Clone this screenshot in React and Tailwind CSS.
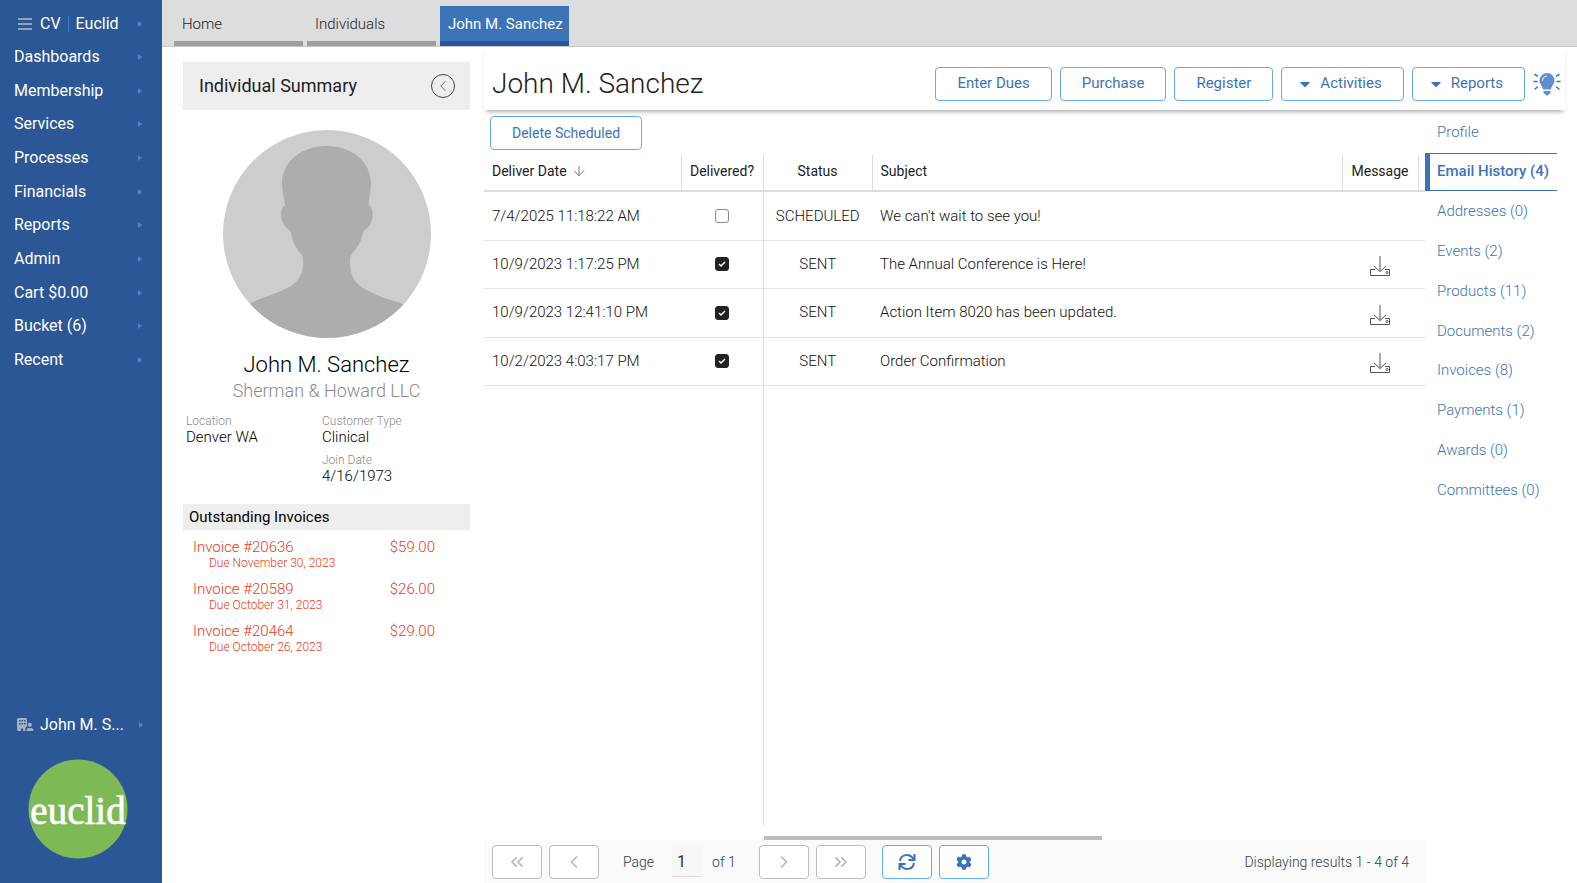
import React, { useState } from "react";
import { ArrowDown, ChevronLeft, ChevronRight, ChevronsLeft, ChevronsRight } from "lucide-react";
import { FaCaretDown, FaCog } from "react-icons/fa";

const MENU = [
  "Dashboards",
  "Membership",
  "Services",
  "Processes",
  "Financials",
  "Reports",
  "Admin",
  "Cart $0.00",
  "Bucket (6)",
  "Recent",
];

const TABS = ["Home", "Individuals", "John M. Sanchez"];

const INVOICES = [
  { number: "20636", due: "November 30, 2023", amount: "$59.00" },
  { number: "20589", due: "October 31, 2023", amount: "$26.00" },
  { number: "20464", due: "October 26, 2023", amount: "$29.00" },
];

const EMAILS = [
  { date: "7/4/2025 11:18:22 AM", delivered: false, status: "SCHEDULED", subject: "We can't wait to see you!" },
  { date: "10/9/2023 1:17:25 PM", delivered: true, status: "SENT", subject: "The Annual Conference is Here!" },
  { date: "10/9/2023 12:41:10 PM", delivered: true, status: "SENT", subject: "Action Item 8020 has been updated." },
  { date: "10/2/2023 4:03:17 PM", delivered: true, status: "SENT", subject: "Order Confirmation" },
];

const SECTIONS = [
  "Profile",
  "Email History (4)",
  "Addresses (0)",
  "Events (2)",
  "Products (11)",
  "Documents (2)",
  "Invoices (8)",
  "Payments (1)",
  "Awards (0)",
  "Committees (0)",
];

function MenuArrow() {
  return (
    <svg viewBox="0 0 4 6" className="h-[6px] w-[4px] fill-[#4a86cc]" aria-hidden="true">
      <path d="M0 0 L4 3 L0 6 Z" />
    </svg>
  );
}

function Avatar() {
  return (
    <svg viewBox="0 0 208 208" className="mx-auto mt-5 block size-[208px]" role="img" aria-label="No photo">
      <defs>
        <clipPath id="avatar-clip">
          <circle cx="104" cy="104" r="104" />
        </clipPath>
      </defs>
      <g clipPath="url(#avatar-clip)">
        <rect width="208" height="208" fill="#cdcdcd" />
        <path
          fill="#adadad"
          d="M103.500 16 C128 16 148 31 148 54 C148 62 146 68 145.500 75 C151 77 150 88 148 93 C146 98 142 99 140 102 C138 113 134 118 129 124 C127 127 127 129 127 133 C127 151 138 158 148 162 C158 168 170 170 180 174 L208 208 H0 L28 173 C40 167 50 165 60 160 C72 155 81 147 80 132 C80 128 80 126 78 124 C73 118 69 111 68 102 C66 99 62 98 60 93 C57 88 57 78 62 75 C61 68 59 62 59 54 C59 31 79 16 103.500 16 Z"
        />
      </g>
    </svg>
  );
}

function Logo() {
  return (
    <svg viewBox="0 0 100 100" className="ml-[28px] block size-[100px]" role="img" aria-label="euclid">
      <circle cx="50" cy="50" r="49.500" fill="#7dba56" />
      <text
        x="50"
        y="65"
        textAnchor="middle"
        fill="#fff"
        stroke="#fff"
        strokeWidth="0.700"
        fontSize="39"
        fontFamily="'Liberation Serif', serif"
      >
        euclid
      </text>
    </svg>
  );
}

function AccountIcon() {
  return (
    <svg viewBox="0 0 17 14" className="h-[14px] w-[17px]" aria-hidden="true">
      <path
        fill="#a3b0c2"
        fillRule="evenodd"
        d="M1.500 0 H8.500 Q10 0 10 1.500 V8 L8.500 10 V13 H6 V10.500 H4 V13 H1.500 Q0 13 0 11.500 V1.500 Q0 0 1.500 0 Z M2 2 V3.500 H3.500 V2 Z M4.500 2 V3.500 H6 V2 Z M7 2 V3.500 H8.500 V2 Z M2 5 V6.500 H3.500 V5 Z M4.500 5 V6.500 H6 V5 Z M7 5 V6.500 H8.500 V5 Z"
      />
      <circle cx="12.800" cy="6.800" r="2.100" fill="#a3b0c2" />
      <path fill="#a3b0c2" d="M9.500 13 Q9.500 10 12 10 H14 Q16.500 10 16.500 13 Z" />
    </svg>
  );
}

function BulbIcon() {
  return (
    <svg viewBox="0 0 28 24" className="h-6 w-7" aria-hidden="true">
      <path fill="#5b8fd0" d="M14 1 A7.500 7.500 0 0 1 21.500 8.500 C21.500 12 18.500 13.500 18 17.500 H10 C9.500 13.500 6.500 12 6.500 8.500 A7.500 7.500 0 0 1 14 1 Z" />
      <path fill="#5b8fd0" d="M10.500 19 H17.500 V20.500 Q17.500 21.500 16 22 Q15.500 23.500 14 23.500 Q12.500 23.500 12 22 Q10.500 21.500 10.500 20.500 Z" />
      <path fill="none" stroke="#fff" strokeLinecap="round" d="M9.500 8.500 Q9.500 4.500 13.500 4" />
      <path
        fill="none"
        stroke="#3b73b9"
        strokeWidth="1.500"
        strokeLinecap="round"
        d="M2 2.500 L4.500 4 M1 9.500 H4 M2 17 L4.500 15 M26 2.500 L23.500 4 M27 9.500 H24 M26 17 L23.500 15"
      />
    </svg>
  );
}

function DownloadIcon() {
  return (
    <svg viewBox="0 0 20 20" className="size-5" fill="none" stroke="#555" aria-hidden="true">
      <path d="M10 0 V15.500 M4 10 L10 15.500 L16 10" />
      <path d="M5 13.500 H0.500 V19.500 H19.500 V13.500 H15" />
      <circle cx="17" cy="16.500" r="1" />
    </svg>
  );
}

function RefreshIcon() {
  return (
    <svg viewBox="0 0 18 18" className="size-[18px]" fill="none" stroke="#3b73b9" strokeWidth="2" aria-hidden="true">
      <path d="M2 8 C3 1 11.500 0 15.500 6 M16.500 1 V7 H10.500" />
      <path d="M16 10 C15 17 6.500 18 2.500 12 M1.500 17 V11 H7.500" />
    </svg>
  );
}

function ActionButton({ children, caret, className = "text-[15px]" }) {
  return (
    <button
      type="button"
      className={`flex h-[34px] items-center justify-center rounded-[4px] border border-[#62ade6] bg-white pr-[21px] whitespace-nowrap text-[#3b73b9] ${
        caret ? "pl-[18px]" : "pl-[21px]"
      } ${className}`}
    >
      {caret && <FaCaretDown className="mr-[10px] h-4 w-[10px]" />}
      {children}
    </button>
  );
}

function PagerButton({ label, children, active }) {
  return (
    <button
      type="button"
      aria-label={label}
      disabled={!active}
      className={`flex h-[34px] w-[50px] items-center justify-center rounded-[4px] border bg-white ${
        active ? "border-[#62ade6] text-[#3b73b9]" : "border-[#bdbdbd] text-[#b5b5b5]"
      }`}
    >
      {children}
    </button>
  );
}

function Sidebar() {
  return (
    <aside className="flex w-[162px] shrink-0 flex-col bg-[#2b5797] text-base text-white">
      <div className="flex h-10 items-center pt-2 pr-5 pl-[18px]">
        <svg viewBox="0 0 14 12" className="mr-2 h-3 w-[14px]" stroke="#8ea2b8" strokeWidth="2" aria-hidden="true">
          <path d="M0 1 H14 M0 6 H14 M0 11 H14" />
        </svg>
        <span>CV</span>
        <span className="mx-[7px] h-4 w-px bg-[#3f7cc4]" />
        <span className="flex-1">Euclid</span>
        <MenuArrow />
      </div>
      <nav className="grid h-[337px] auto-rows-fr">
        {MENU.map((item) => (
          <a key={item} href="#" className="flex items-center justify-between pr-5 pl-[14px]">
            {item}
            <MenuArrow />
          </a>
        ))}
      </nav>
      <div className="mt-auto flex items-center pr-[19px] pl-[17px]">
        <AccountIcon />
        <span className="ml-[6px] flex-1">John M. S...</span>
        <MenuArrow />
      </div>
      <div className="mt-[22px] mb-6">
        <Logo />
      </div>
    </aside>
  );
}

function Field({ label, value }) {
  return (
    <div>
      <dt className="text-xs leading-4 font-light text-[#8a8a8a]">{label}</dt>
      <dd className="mb-[7px] text-[15px] leading-4 font-light text-black">{value}</dd>
    </div>
  );
}

function Summary() {
  return (
    <section className="w-[287px] shrink-0 pt-[15px]">
      <div className="flex h-12 items-center justify-between bg-[#eee] pr-[15px] pl-4">
        <h2 className="text-lg text-[#222]">Individual Summary</h2>
        <button
          type="button"
          aria-label="Collapse summary"
          className="flex size-6 items-center justify-center rounded-full border border-[#444] text-[#444]"
        >
          <ChevronLeft className="size-[18px]" strokeWidth={1} />
        </button>
      </div>
      <Avatar />
      <h3 className="mt-[13px] text-center text-[22px] leading-7 font-light text-black">John M. Sanchez</h3>
      <p className="text-center text-lg leading-6 font-light text-[#8a8a8a]">Sherman &amp; Howard LLC</p>
      <dl className="mt-[10px] grid grid-cols-[136px_1fr] pl-[3px]">
        <Field label="Location" value="Denver WA" />
        <div>
          <Field label="Customer Type" value="Clinical" />
          <Field label="Join Date" value="4/16/1973" />
        </div>
      </dl>
      <h3 className="mt-[13px] bg-[#eee] px-[6px] text-[15px] leading-[26px] text-black">Outstanding Invoices</h3>
      <ul className="mt-[9px] font-light text-[#ea3a20]">
        {INVOICES.map((inv) => (
          <li key={inv.number} className="mb-2.5 pr-[35px] pl-[10px]">
            <div className="flex justify-between text-[15px] leading-4">
              <a href="#">Invoice #{inv.number}</a>
              <span>{inv.amount}</span>
            </div>
            <div className="pl-4 text-xs leading-4">Due {inv.due}</div>
          </li>
        ))}
      </ul>
    </section>
  );
}

function EmailTable() {
  return (
    <table className="h-full w-full table-fixed border-collapse text-left">
      <colgroup>
        <col className="w-[197px]" />
        <col className="w-[82px]" />
        <col className="w-[109px]" />
        <col />
        <col className="w-[76px]" />
        <col className="w-[7px]" />
      </colgroup>
      <thead>
        <tr className="h-[36px] border-b-2 border-[#ddd] text-sm text-[#222] [&>th]:border-r [&>th]:border-r-[#ddd] [&>th]:pb-[3px] [&>th]:font-normal">
          <th className="pl-2">
            <span className="flex items-center">
              Deliver Date
              <ArrowDown className="ml-1 size-4 text-[#777]" strokeWidth={1.5} />
            </span>
          </th>
          <th className="text-center">Delivered?</th>
          <th className="text-center">Status</th>
          <th className="pl-2">Subject</th>
          <th className="text-center">Message</th>
          <td />
        </tr>
      </thead>
      <tbody className="text-[15px] font-light text-[#111]">
        {EMAILS.map((email) => (
          <tr key={email.date} className="border-b border-[#e4e4e4] odd:h-[49px] even:h-[48px]">
            <td className="pl-2">{email.date}</td>
            <td className="border-r border-r-[#ddd]">
              <input
                type="checkbox"
                aria-label={`Delivered ${email.date}`}
                defaultChecked={email.delivered}
                className="mx-auto block size-[14px] appearance-none rounded-[3px] border border-[#8a8a8a] bg-white bg-center bg-no-repeat checked:border-[#222] checked:bg-[#222] checked:bg-[url('data:image/svg+xml,%3Csvg%20xmlns=%22http://www.w3.org/2000/svg%22%20width=%2212%22%20height=%2212%22%3E%3Cpath%20d=%22M3%206l2%202%204-4%22%20fill=%22none%22%20stroke=%22white%22%20stroke-width=%221.5%22/%3E%3C/svg%3E')]"
              />
            </td>
            <td className="text-center">{email.status}</td>
            <td className="pl-2">{email.subject}</td>
            <td>
              {email.delivered && (
                <button type="button" aria-label="Download message" className="mx-auto mt-1 block">
                  <DownloadIcon />
                </button>
              )}
            </td>
            <td />
          </tr>
        ))}
        <tr aria-hidden="true">
          <td />
          <td className="border-r border-r-[#ddd]" />
          <td colSpan={4} />
        </tr>
      </tbody>
    </table>
  );
}

function Pager() {
  const [page, setPage] = useState("1");

  return (
    <footer className="flex h-[43px] items-center bg-[#fafafa] pr-4 pl-2 text-sm font-light text-[#2c3e50]">
      <div className="flex gap-[7px]">
        <PagerButton label="First page">
          <ChevronsLeft className="size-5" />
        </PagerButton>
        <PagerButton label="Previous page">
          <ChevronLeft className="size-5" />
        </PagerButton>
      </div>
      <label htmlFor="page" className="ml-6">
        Page
      </label>
      <input
        id="page"
        value={page}
        onChange={(e) => setPage(e.target.value)}
        className="mr-[10px] ml-[18px] h-[31px] w-[30px] border-b border-[#ddd] bg-[#f7f7f7] pl-[5px] text-base font-normal text-[#333]"
      />
      <span>of 1</span>
      <div className="ml-[23px] flex gap-[7px]">
        <PagerButton label="Next page">
          <ChevronRight className="size-5" />
        </PagerButton>
        <PagerButton label="Last page">
          <ChevronsRight className="size-5" />
        </PagerButton>
      </div>
      <div className="ml-4 flex gap-[7px]">
        <PagerButton label="Refresh" active>
          <RefreshIcon />
        </PagerButton>
        <PagerButton label="Settings" active>
          <FaCog className="size-4" />
        </PagerButton>
      </div>
      <span className="ml-auto">Displaying results 1 - 4 of 4</span>
    </footer>
  );
}

export default function App() {
  return (
    <div className="flex h-screen overflow-hidden bg-white font-['Roboto',sans-serif]">
      <Sidebar />
      <div className="flex min-w-0 flex-1 flex-col">
        <div className="flex h-[47px] shrink-0 gap-1 border-b border-[#c8c8c8] bg-[#ddd] pt-[6px] pl-3">
          {TABS.map((tab, i) => (
            <button
              key={tab}
              type="button"
              className={`w-[129px] border-b-[5px] pt-px pl-2 text-left text-[15px] ${
                i === 2 ? "border-[#2b5797] bg-[#3b73b9] text-white" : "border-[#9e9e9e] font-light text-[#222]"
              }`}
            >
              {tab}
            </button>
          ))}
        </div>

        <div className="flex min-h-0 flex-1 pl-[21px]">
          <Summary />

          <main className="ml-[14px] flex min-w-0 flex-1 flex-col">
            <header className="mr-3 flex h-[63px] shrink-0 items-center bg-white pt-[10px] pr-1 pl-2 shadow-[0_4px_4px_-2px_rgba(0,0,0,0.3)]">
              <h1 className="mr-auto text-[28px] font-light text-[#222]">John M. Sanchez</h1>
              <div className="flex items-center gap-2">
                <ActionButton>Enter Dues</ActionButton>
                <ActionButton>Purchase</ActionButton>
                <ActionButton>Register</ActionButton>
                <ActionButton caret>Activities</ActionButton>
                <ActionButton caret>Reports</ActionButton>
                <button type="button" aria-label="Tips">
                  <BulbIcon />
                </button>
              </div>
            </header>

            <div className="flex min-h-0 flex-1">
              <div className="flex min-w-0 flex-1 flex-col">
                <div className="px-[6px] pt-[6px] pb-[5px]">
                  <ActionButton className="text-sm">Delete Scheduled</ActionButton>
                </div>
                <div className="min-h-0 flex-1">
                  <EmailTable />
                </div>
                <div className="mt-[10px] ml-[280px] h-1 w-[338px] bg-[#bdbdbd]" />
                <Pager />
              </div>

              <nav className="mr-5 flex w-[132px] shrink-0 flex-col pt-[2px] text-[15px] font-light text-[#3b73b9]">
                <div className="grid h-[398px] auto-rows-fr">
                  {SECTIONS.map((section, i) => (
                    <a
                      key={section}
                      href="#"
                      className={
                        i === 1
                          ? "my-px flex items-center border-y border-l-[5px] border-[#3b73b9] pl-[7px] font-medium whitespace-nowrap"
                          : "flex items-center pl-3"
                      }
                    >
                      {section}
                    </a>
                  ))}
                </div>
              </nav>
            </div>
          </main>
        </div>
      </div>
    </div>
  );
}
